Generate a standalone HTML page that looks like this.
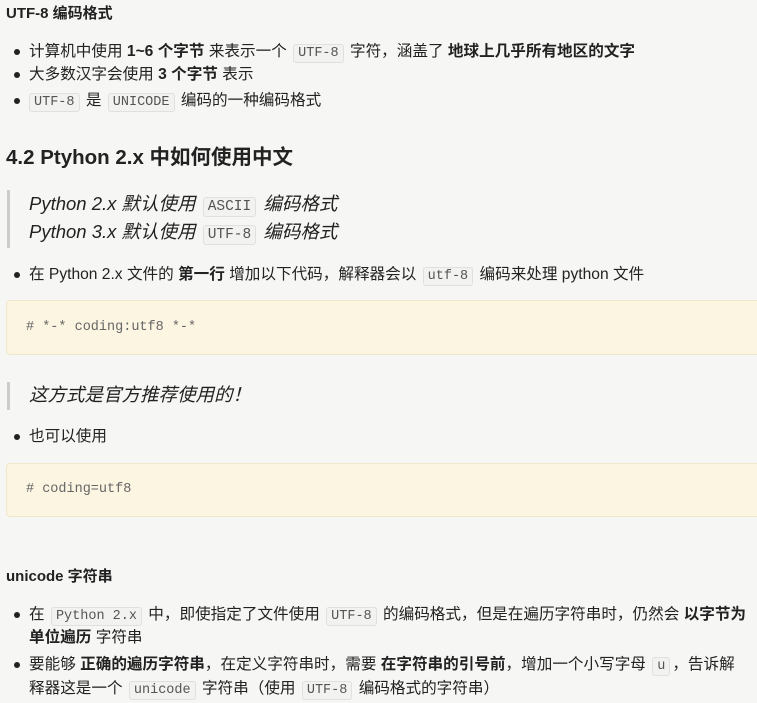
<!DOCTYPE html><html><head><meta charset="utf-8"><style>
body{margin:0;width:757px;height:703px;background:#f6f6f4;overflow:hidden;position:relative;font-family:"Liberation Sans","Noto Sans CJK SC",sans-serif;color:#222;font-size:15.6px}
.a{position:absolute;white-space:nowrap;line-height:20px}
.b{position:absolute;left:14px;width:6px;height:6px;border-radius:50%;background:#222}
code{font-family:"Liberation Mono","Noto Sans CJK SC",monospace;font-size:13.5px;color:#555;border:1px solid #e0e0dc;background:#f2f2f0;border-radius:3px;padding:1px 4px;margin:0 2px}
b{font-weight:bold}
.cb{position:absolute;left:6px;width:760px;background:#fbf5e1;border:1px solid #efe7cc;border-radius:4px}
.ct{position:absolute;left:26px;font-family:"Liberation Mono",monospace;font-size:13.5px;color:#666}
.bq{position:absolute;left:7px;width:3px;background:#ccc}
i{font-style:italic;font-size:18.5px}
</style></head><body>
<div class="a" style="left:6px;top:4px;font-weight:bold;font-size:15px">UTF-8 编码格式</div>
<div class="b" style="top:49px"></div><div class="a" style="left:29px;top:42px">计算机中使用 <b>1~6 个字节</b> 来表示一个 <code>UTF-8</code> 字符，涵盖了 <b>地球上几乎所有地区的文字</b></div>
<div class="b" style="top:72px"></div><div class="a" style="left:29px;top:65px">大多数汉字会使用 <b>3 个字节</b> 表示</div>
<div class="b" style="top:98px"></div><div class="a" style="left:29px;top:91px"><code style="margin-left:0">UTF-8</code> 是 <code>UNICODE</code> 编码的一种编码格式</div>
<div class="a" style="left:6px;top:145px;font-weight:bold;font-size:20.5px;line-height:26px">4.2 Ptyhon 2.x 中如何使用中文</div>
<div class="bq" style="top:190px;height:58px"></div>
<div class="a" style="left:29px;top:194px"><i>Python 2.x 默认使用 <code style="font-style:normal;font-size:14.5px">ASCII</code> 编码格式</i></div>
<div class="a" style="left:29px;top:222px"><i>Python 3.x 默认使用 <code style="font-style:normal;font-size:14.5px">UTF-8</code> 编码格式</i></div>
<div class="b" style="top:272px"></div><div class="a" style="left:29px;top:265px">在 Python 2.x 文件的 <b>第一行</b> 增加以下代码，解释器会以 <code>utf-8</code> 编码来处理 python 文件</div>
<div class="cb" style="top:300px;height:53px"></div><div class="ct" style="top:320px"># *-* coding:utf8 *-*</div>
<div class="bq" style="top:382px;height:28px"></div>
<div class="a" style="left:29px;top:385px"><i>这方式是官方推荐使用的！</i></div>
<div class="b" style="top:434px"></div><div class="a" style="left:29px;top:427px">也可以使用</div>
<div class="cb" style="top:463px;height:52px"></div><div class="ct" style="top:482px"># coding=utf8</div>
<div class="a" style="left:6px;top:567px;font-weight:bold;font-size:15px">unicode 字符串</div>
<div class="b" style="top:612px"></div><div class="a" style="left:29px;top:605px">在 <code>Python 2.x</code> 中，即使指定了文件使用 <code>UTF-8</code> 的编码格式，但是在遍历字符串时，仍然会 <b>以字节为</b></div>
<div class="a" style="left:29px;top:628px"><b>单位遍历</b> 字符串</div>
<div class="b" style="top:662px"></div><div class="a" style="left:29px;top:655px">要能够 <b>正确的遍历字符串</b>，在定义字符串时，需要 <b>在字符串的引号前</b>，增加一个小写字母 <code>u</code>，告诉解</div>
<div class="a" style="left:29px;top:679px">释器这是一个 <code>unicode</code> 字符串（使用 <code>UTF-8</code> 编码格式的字符串）</div>
</body></html>
